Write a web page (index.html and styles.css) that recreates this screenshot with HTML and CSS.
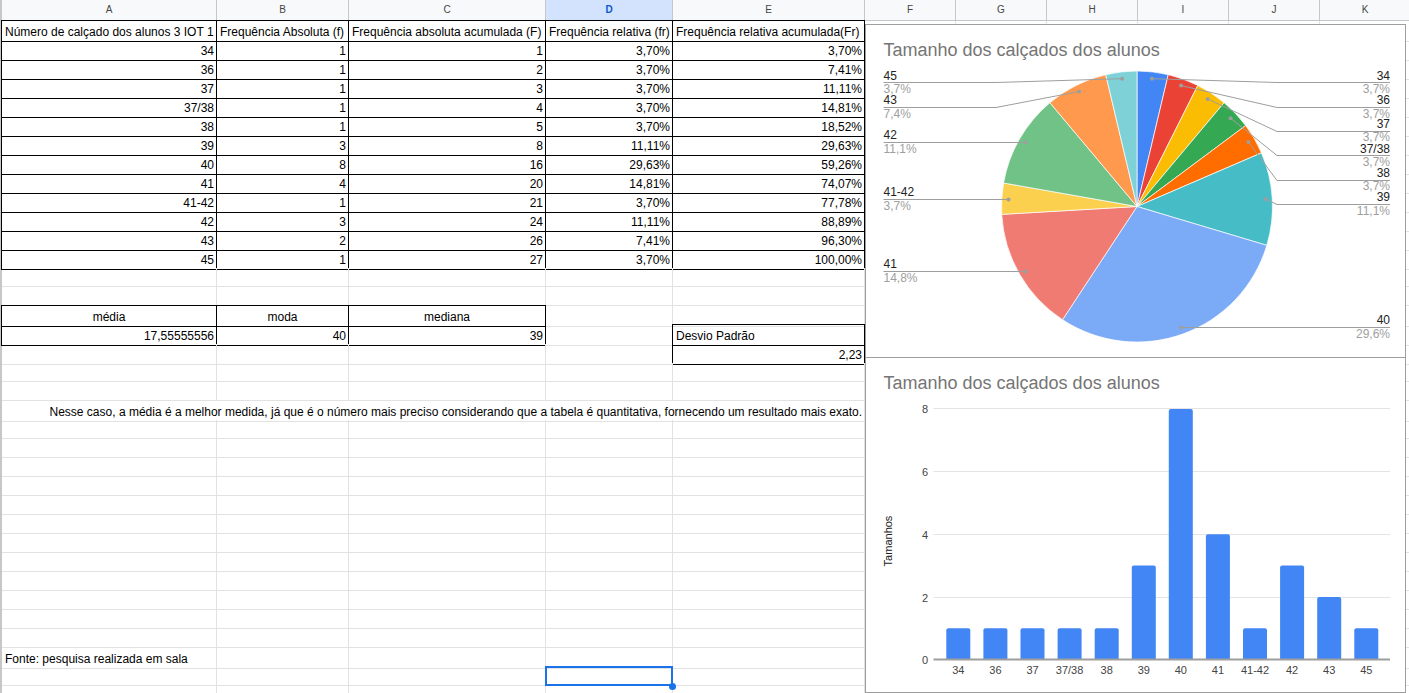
FILE: index.html
```html
<!DOCTYPE html>
<html lang="pt">
<head>
<meta charset="utf-8">
<title>Planilha</title>
<link rel="stylesheet" href="styles.css">
</head>
<body>
<div class="page">
  <div class="sheet">
    <div class="row hdr"><div>A</div><div>B</div><div>C</div><div class="sel">D</div><div>E</div><div>F</div><div>G</div><div>H</div><div>I</div><div>J</div><div>K</div></div>
    <div class="row"><div class="b btl">Número de calçado dos alunos 3 IOT 1</div><div class="b bt">Frequência Absoluta (f)</div><div class="b bt">Frequência absoluta acumulada (F)</div><div class="b bt">Frequência relativa (fr)</div><div class="b bt">Frequência relativa acumulada(Fr)</div><div></div><div></div><div></div><div></div><div></div><div></div></div>
    <div class="row"><div class="b bl n">34</div><div class="b n">1</div><div class="b n">1</div><div class="b n">3,70%</div><div class="b n">3,70%</div><div></div><div></div><div></div><div></div><div></div><div></div></div>
    <div class="row"><div class="b bl n">36</div><div class="b n">1</div><div class="b n">2</div><div class="b n">3,70%</div><div class="b n">7,41%</div><div></div><div></div><div></div><div></div><div></div><div></div></div>
    <div class="row"><div class="b bl n">37</div><div class="b n">1</div><div class="b n">3</div><div class="b n">3,70%</div><div class="b n">11,11%</div><div></div><div></div><div></div><div></div><div></div><div></div></div>
    <div class="row"><div class="b bl n">37/38</div><div class="b n">1</div><div class="b n">4</div><div class="b n">3,70%</div><div class="b n">14,81%</div><div></div><div></div><div></div><div></div><div></div><div></div></div>
    <div class="row"><div class="b bl n">38</div><div class="b n">1</div><div class="b n">5</div><div class="b n">3,70%</div><div class="b n">18,52%</div><div></div><div></div><div></div><div></div><div></div><div></div></div>
    <div class="row"><div class="b bl n">39</div><div class="b n">3</div><div class="b n">8</div><div class="b n">11,11%</div><div class="b n">29,63%</div><div></div><div></div><div></div><div></div><div></div><div></div></div>
    <div class="row"><div class="b bl n">40</div><div class="b n">8</div><div class="b n">16</div><div class="b n">29,63%</div><div class="b n">59,26%</div><div></div><div></div><div></div><div></div><div></div><div></div></div>
    <div class="row"><div class="b bl n">41</div><div class="b n">4</div><div class="b n">20</div><div class="b n">14,81%</div><div class="b n">74,07%</div><div></div><div></div><div></div><div></div><div></div><div></div></div>
    <div class="row"><div class="b bl n">41-42</div><div class="b n">1</div><div class="b n">21</div><div class="b n">3,70%</div><div class="b n">77,78%</div><div></div><div></div><div></div><div></div><div></div><div></div></div>
    <div class="row"><div class="b bl n">42</div><div class="b n">3</div><div class="b n">24</div><div class="b n">11,11%</div><div class="b n">88,89%</div><div></div><div></div><div></div><div></div><div></div><div></div></div>
    <div class="row"><div class="b bl n">43</div><div class="b n">2</div><div class="b n">26</div><div class="b n">7,41%</div><div class="b n">96,30%</div><div></div><div></div><div></div><div></div><div></div><div></div></div>
    <div class="row"><div class="b bl n">45</div><div class="b n">1</div><div class="b n">27</div><div class="b n">3,70%</div><div class="b n">100,00%</div><div></div><div></div><div></div><div></div><div></div><div></div></div>
    <div class="row"><div></div><div></div><div></div><div></div><div></div><div></div><div></div><div></div><div></div><div></div><div></div></div>
    <div class="row"><div></div><div></div><div></div><div></div><div></div><div></div><div></div><div></div><div></div><div></div><div></div></div>
    <div class="row"><div class="b btl ctr">média</div><div class="b bt ctr">moda</div><div class="b bt ctr">mediana</div><div></div><div></div><div></div><div></div><div></div><div></div><div></div><div></div></div>
    <div class="row"><div class="b bl n">17,55555556</div><div class="b n">40</div><div class="b n">39</div><div></div><div class="b btl">Desvio Padrão</div><div></div><div></div><div></div><div></div><div></div><div></div></div>
    <div class="row"><div></div><div></div><div></div><div></div><div class="b bl n">2,23</div><div></div><div></div><div></div><div></div><div></div><div></div></div>
    <div class="row"><div></div><div></div><div></div><div></div><div></div><div></div><div></div><div></div><div></div><div></div><div></div></div>
    <div class="row"><div></div><div></div><div></div><div></div><div></div><div></div><div></div><div></div><div></div><div></div><div></div></div>
    <div class="row"><div class="span5 n">Nesse caso, a média é a melhor medida, já que é o número mais preciso considerando que a tabela é quantitativa, fornecendo um resultado mais exato.</div><div></div><div></div><div></div><div></div><div></div><div></div></div>
    <div class="row"><div></div><div></div><div></div><div></div><div></div><div></div><div></div><div></div><div></div><div></div><div></div></div>
    <div class="row"><div></div><div></div><div></div><div></div><div></div><div></div><div></div><div></div><div></div><div></div><div></div></div>
    <div class="row"><div></div><div></div><div></div><div></div><div></div><div></div><div></div><div></div><div></div><div></div><div></div></div>
    <div class="row"><div></div><div></div><div></div><div></div><div></div><div></div><div></div><div></div><div></div><div></div><div></div></div>
    <div class="row"><div></div><div></div><div></div><div></div><div></div><div></div><div></div><div></div><div></div><div></div><div></div></div>
    <div class="row"><div></div><div></div><div></div><div></div><div></div><div></div><div></div><div></div><div></div><div></div><div></div></div>
    <div class="row"><div></div><div></div><div></div><div></div><div></div><div></div><div></div><div></div><div></div><div></div><div></div></div>
    <div class="row"><div></div><div></div><div></div><div></div><div></div><div></div><div></div><div></div><div></div><div></div><div></div></div>
    <div class="row"><div></div><div></div><div></div><div></div><div></div><div></div><div></div><div></div><div></div><div></div><div></div></div>
    <div class="row"><div></div><div></div><div></div><div></div><div></div><div></div><div></div><div></div><div></div><div></div><div></div></div>
    <div class="row"><div></div><div></div><div></div><div></div><div></div><div></div><div></div><div></div><div></div><div></div><div></div></div>
    <div class="row"><div></div><div></div><div></div><div></div><div></div><div></div><div></div><div></div><div></div><div></div><div></div></div>
    <div class="row"><div>Fonte: pesquisa realizada em sala</div><div></div><div></div><div></div><div></div><div></div><div></div><div></div><div></div><div></div><div></div></div>
    <div class="row"><div></div><div></div><div></div><div class="cur"></div><div></div><div></div><div></div><div></div><div></div><div></div><div></div></div>
    <div class="row"><div></div><div></div><div></div><div></div><div></div><div></div><div></div><div></div><div></div><div></div><div></div></div>
  </div>

  <div class="chart pie">
    <svg width="539" height="332" viewBox="866 25 539 332">
      <text x="883.5" y="56" class="ttl">Tamanho dos calçados dos alunos</text>
      <g class="slices">
        <path fill="#4285f4" d="M1137 206.5 L1137 71 A135.5 135.5 0 0 1 1168.25 74.65 Z"/>
        <path fill="#ea4335" d="M1137 206.5 L1168.25 74.65 A135.5 135.5 0 0 1 1197.8 85.41 Z"/>
        <path fill="#fbbc04" d="M1137 206.5 L1197.8 85.41 A135.5 135.5 0 0 1 1224.1 102.7 Z"/>
        <path fill="#34a853" d="M1137 206.5 L1224.1 102.7 A135.5 135.5 0 0 1 1245.67 125.56 Z"/>
        <path fill="#ff6d01" d="M1137 206.5 L1245.67 125.56 A135.5 135.5 0 0 1 1261.45 152.89 Z"/>
        <path fill="#46bdc6" d="M1137 206.5 L1261.45 152.89 A135.5 135.5 0 0 1 1266.81 245.36 Z"/>
        <path fill="#7baaf7" d="M1137 206.5 L1266.81 245.36 A135.5 135.5 0 0 1 1062.54 319.71 Z"/>
        <path fill="#f07b72" d="M1137 206.5 L1062.54 319.71 A135.5 135.5 0 0 1 1001.73 214.38 Z"/>
        <path fill="#fcd04f" d="M1137 206.5 L1001.73 214.38 A135.5 135.5 0 0 1 1003.56 182.97 Z"/>
        <path fill="#71c287" d="M1137 206.5 L1003.56 182.97 A135.5 135.5 0 0 1 1049.9 102.7 Z"/>
        <path fill="#ff994d" d="M1137 206.5 L1049.9 102.7 A135.5 135.5 0 0 1 1105.75 74.65 Z"/>
        <path fill="#7ed1d7" d="M1137 206.5 L1105.75 74.65 A135.5 135.5 0 0 1 1137 71 Z"/>
      </g>
      <g class="lead">
        <polyline points="1151.9,78.7 1277,82.5 1390,82.5"/>
        <polyline points="1181,85.6 1277,107.5 1390,107.5"/>
        <polyline points="1207.7,99 1277,131.5 1390,131.5"/>
        <polyline points="1230.6,118.2 1277,155.5 1390,155.5"/>
        <polyline points="1248.5,142.1 1277,180.5 1390,180.5"/>
        <polyline points="1265.5,199 1277,204.5 1390,204.5"/>
        <polyline points="1181,327.5 1390,327.5"/>
        <polyline points="883.5,82.5 996,82.5 1122.1,78.7"/>
        <polyline points="883.5,107.5 996,107.5 1079.2,91.5"/>
        <polyline points="883.5,142.5 1025.5,142.5"/>
        <polyline points="883.5,199.5 1008.5,199.5"/>
        <polyline points="883.5,271.5 1025.5,271.5"/>
      </g>
      <g class="dots">
        <circle cx="1151.9" cy="78.7" r="2"/>
        <circle cx="1181" cy="85.6" r="2"/>
        <circle cx="1207.7" cy="99" r="2"/>
        <circle cx="1230.6" cy="118.2" r="2"/>
        <circle cx="1248.5" cy="142.1" r="2"/>
        <circle cx="1265.5" cy="199" r="2"/>
        <circle cx="1181" cy="327.5" r="2"/>
        <circle cx="1122.1" cy="78.7" r="2"/>
        <circle cx="1079.2" cy="91.5" r="2"/>
        <circle cx="1025.5" cy="142.5" r="2"/>
        <circle cx="1008.5" cy="199.5" r="2"/>
        <circle cx="1025.5" cy="271.5" r="2"/>
      </g>
      <g class="lbl right">
        <text x="1390" y="79.5" class="nm">34</text><text x="1390" y="93" class="pc">3,7%</text>
        <text x="1390" y="104" class="nm">36</text><text x="1390" y="117.5" class="pc">3,7%</text>
        <text x="1390" y="128" class="nm">37</text><text x="1390" y="141" class="pc">3,7%</text>
        <text x="1390" y="152.5" class="nm">37/38</text><text x="1390" y="165.5" class="pc">3,7%</text>
        <text x="1390" y="177" class="nm">38</text><text x="1390" y="190" class="pc">3,7%</text>
        <text x="1390" y="201" class="nm">39</text><text x="1390" y="215" class="pc">11,1%</text>
        <text x="1390" y="324" class="nm">40</text><text x="1390" y="338" class="pc">29,6%</text>
      </g>
      <g class="lbl left">
        <text x="883.5" y="79.5" class="nm">45</text><text x="883.5" y="93" class="pc">3,7%</text>
        <text x="883.5" y="104" class="nm">43</text><text x="883.5" y="118" class="pc">7,4%</text>
        <text x="883.5" y="139" class="nm">42</text><text x="883.5" y="153" class="pc">11,1%</text>
        <text x="883.5" y="196" class="nm">41-42</text><text x="883.5" y="210" class="pc">3,7%</text>
        <text x="883.5" y="268" class="nm">41</text><text x="883.5" y="282" class="pc">14,8%</text>
      </g>
    </svg>
  </div>

  <div class="chart bar">
    <svg width="539" height="334" viewBox="866 358 539 334">
      <text x="883.5" y="389" class="ttl">Tamanho dos calçados dos alunos</text>
      <g class="grid">
        <line x1="933.5" y1="408.5" x2="1390" y2="408.5"/>
        <line x1="933.5" y1="471.5" x2="1390" y2="471.5"/>
        <line x1="933.5" y1="534.5" x2="1390" y2="534.5"/>
        <line x1="933.5" y1="597.5" x2="1390" y2="597.5"/>
      </g>
      <g class="ylab">
        <text x="928" y="412.5">8</text>
        <text x="928" y="475.5">6</text>
        <text x="928" y="538.5">4</text>
        <text x="928" y="601.5">2</text>
        <text x="928" y="663.5">0</text>
      </g>
      <text class="ytitle" x="891.5" y="541" transform="rotate(-90 891.5 541)">Tamanhos</text>
      <g class="bars">
        <path d="M946.3 660 V630.2 Q946.3 628.2 948.3 628.2 H968.3 Q970.3 628.2 970.3 630.2 V660 Z"/>
        <path d="M983.4 660 V630.2 Q983.4 628.2 985.4 628.2 H1005.4 Q1007.4 628.2 1007.4 630.2 V660 Z"/>
        <path d="M1020.5 660 V630.2 Q1020.5 628.2 1022.5 628.2 H1042.5 Q1044.5 628.2 1044.5 630.2 V660 Z"/>
        <path d="M1057.6 660 V630.2 Q1057.6 628.2 1059.6 628.2 H1079.6 Q1081.6 628.2 1081.6 630.2 V660 Z"/>
        <path d="M1094.7 660 V630.2 Q1094.7 628.2 1096.7 628.2 H1116.7 Q1118.7 628.2 1118.7 630.2 V660 Z"/>
        <path d="M1131.8 660 V567.6 Q1131.8 565.6 1133.8 565.6 H1153.8 Q1155.8 565.6 1155.8 567.6 V660 Z"/>
        <path d="M1168.8 660 V411.1 Q1168.8 409.1 1170.8 409.1 H1190.8 Q1192.8 409.1 1192.8 411.1 V660 Z"/>
        <path d="M1205.9 660 V536.3 Q1205.9 534.3 1207.9 534.3 H1227.9 Q1229.9 534.3 1229.9 536.3 V660 Z"/>
        <path d="M1243 660 V630.2 Q1243 628.2 1245 628.2 H1265 Q1267 628.2 1267 630.2 V660 Z"/>
        <path d="M1280.1 660 V567.6 Q1280.1 565.6 1282.1 565.6 H1302.1 Q1304.1 565.6 1304.1 567.6 V660 Z"/>
        <path d="M1317.2 660 V598.9 Q1317.2 596.9 1319.2 596.9 H1339.2 Q1341.2 596.9 1341.2 598.9 V660 Z"/>
        <path d="M1354.3 660 V630.2 Q1354.3 628.2 1356.3 628.2 H1376.3 Q1378.3 628.2 1378.3 630.2 V660 Z"/>
      </g>
      <line class="axis" x1="933.5" y1="659.5" x2="1390" y2="659.5"/>
      <g class="xlab">
        <text x="958.3" y="674">34</text>
        <text x="995.4" y="674">36</text>
        <text x="1032.5" y="674">37</text>
        <text x="1069.6" y="674">37/38</text>
        <text x="1106.7" y="674">38</text>
        <text x="1143.8" y="674">39</text>
        <text x="1180.8" y="674">40</text>
        <text x="1217.9" y="674">41</text>
        <text x="1255" y="674">41-42</text>
        <text x="1292.1" y="674">42</text>
        <text x="1329.2" y="674">43</text>
        <text x="1366.3" y="674">45</text>
      </g>
    </svg>
  </div>
</div>
</body>
</html>
```
FILE: styles.css
```css
* { box-sizing: border-box; }
html, body { margin: 0; padding: 0; }
body {
  background: #fff;
  font-family: "Liberation Sans", Arial, sans-serif;
  width: 1409px;
  height: 693px;
  overflow: hidden;
}
.page {
  position: relative;
  width: 1409px;
  height: 693px;
  overflow: hidden;
}
.sheet {
  width: 1413px;
  border-left: 2px solid #c7c7c7;
}
.row {
  display: grid;
  grid-template-columns: 215px 132px 197px 127px 192px repeat(6, 91px);
  height: 19px;
}
.row > div {
  border-right: 1px solid #e2e2e2;
  border-bottom: 1px solid #e2e2e2;
  font-size: 12px;
  line-height: 17px;
  padding: 3px 3px 0 3px;
  white-space: nowrap;
  color: #000;
  min-width: 0;
}
.row.hdr { height: 21px; }
.row.hdr > div {
  font-size: 10px;
  line-height: 20px;
  padding: 0;
  text-align: center;
  color: #444746;
  background: #f8f9fa;
  border-right-color: #c7c7c7;
  border-bottom-color: #c4c7c5;
}
.row.hdr > .sel {
  background: #d3e3fd;
  color: #0b57d0;
  font-weight: bold;
}
.row > .n { text-align: right; padding-right: 2px; }
.row > .ctr { text-align: center; }
.row > .b { border-right-color: #000; border-bottom-color: #000; }
.row > .bt { box-shadow: 0 -1px 0 #000; }
.row > .bl { box-shadow: -1px 0 0 #000; }
.row > .btl { box-shadow: 0 -1px 0 #000, -1px 0 0 #000, -1px -1px 0 #000; }
.row > .span5 { grid-column: 1 / 6; }
.row > .cur { position: relative; }
.cur::before {
  content: "";
  position: absolute;
  left: -1px; top: -1px; right: -1px; bottom: -1px;
  border: 2px solid #1a73e8;
}
.cur::after {
  content: "";
  position: absolute;
  width: 7px;
  height: 7px;
  right: -4px;
  bottom: -5px;
  border-radius: 50%;
  background: #1a73e8;
}

.chart {
  position: absolute;
  left: 865px;
  width: 541px;
  background: #fff;
  border: 1px solid #9e9e9e;
}
.chart svg { display: block; }
.pie { top: 24px; height: 334px; }
.bar { top: 357px; height: 336px; }

.ttl {
  font-family: "Liberation Sans", Arial, sans-serif;
  font-size: 18px;
  fill: #757575;
}
.slices path { stroke: #fff; stroke-width: 0.7; }
.lead polyline { fill: none; stroke: #9e9e9e; stroke-width: 1; }
.dots circle { fill: #9e9e9e; }
.lbl text { font-family: "Liberation Sans", Arial, sans-serif; font-size: 12px; }
.lbl.right text { text-anchor: end; }
.lbl .nm { fill: #222; }
.lbl .pc { fill: #9e9e9e; }

.grid line { stroke: #e4e4e4; stroke-width: 1; }
.axis { stroke: #9e9e9e; stroke-width: 2; }
.bars path { fill: #4285f4; }
.ylab text, .xlab text {
  font-family: "Liberation Sans", Arial, sans-serif;
  font-size: 11px;
  fill: #444;
}
.ylab text { text-anchor: end; }
.xlab text { text-anchor: middle; }
.ytitle {
  font-family: "Liberation Sans", Arial, sans-serif;
  font-size: 11px;
  fill: #222;
  text-anchor: middle;
}
```
